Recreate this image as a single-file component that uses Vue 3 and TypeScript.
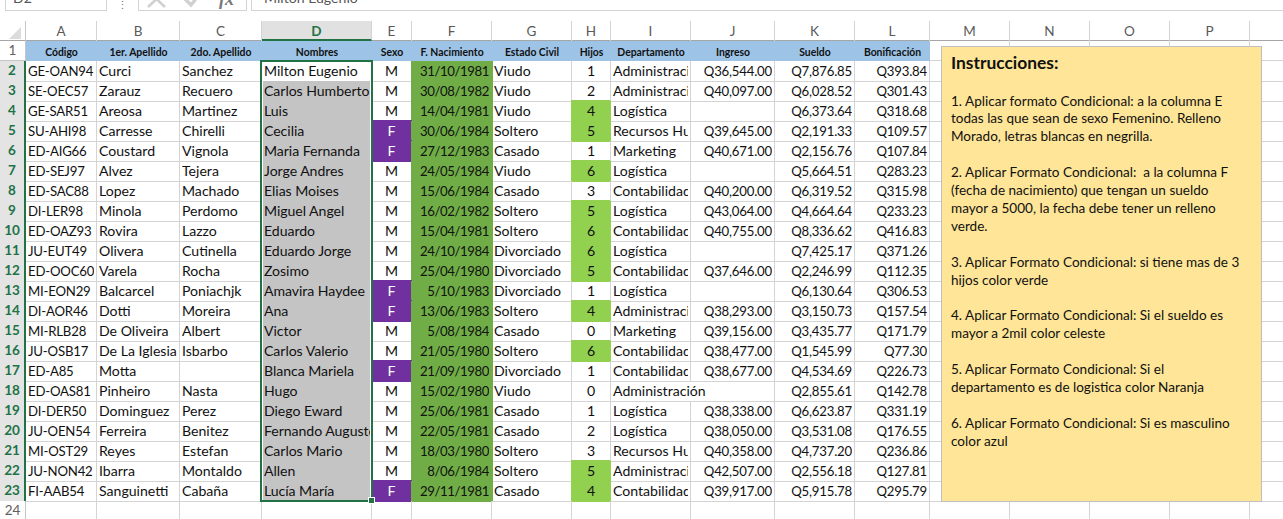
<script setup lang="ts">
interface Row {
  n: number
  cells: string[]
}
const letters = ['A','B','C','D','E','F','G','H','I','J','K','L','M','N','O','P','']
const heads = ['Código','1er. Apellido','2do. Apellido','Nombres','Sexo','F. Nacimiento','Estado Civil','Hijos','Departamento','Ingreso','Sueldo','Bonificación']
const raw = `GE-OAN94|Curci|Sanchez|Milton Eugenio|M|31/10/1981|Viudo|1|Administración|Q36,544.00|Q7,876.85|Q393.84
SE-OEC57|Zarauz|Recuero|Carlos Humberto|M|30/08/1982|Viudo|2|Administración|Q40,097.00|Q6,028.52|Q301.43
GE-SAR51|Areosa|Martinez|Luis|M|14/04/1981|Viudo|4|Logística||Q6,373.64|Q318.68
SU-AHI98|Carresse|Chirelli|Cecilia|F|30/06/1984|Soltero|5|Recursos Humanos|Q39,645.00|Q2,191.33|Q109.57
ED-AIG66|Coustard|Vignola|Maria Fernanda|F|27/12/1983|Casado|1|Marketing|Q40,671.00|Q2,156.76|Q107.84
ED-SEJ97|Alvez|Tejera|Jorge Andres|M|24/05/1984|Viudo|6|Logística||Q5,664.51|Q283.23
ED-SAC88|Lopez|Machado|Elias Moises|M|15/06/1984|Casado|3|Contabilidad|Q40,200.00|Q6,319.52|Q315.98
DI-LER98|Minola|Perdomo|Miguel Angel|M|16/02/1982|Soltero|5|Logística|Q43,064.00|Q4,664.64|Q233.23
ED-OAZ93|Rovira|Lazzo|Eduardo|M|15/04/1981|Soltero|6|Contabilidad|Q40,755.00|Q8,336.62|Q416.83
JU-EUT49|Olivera|Cutinella|Eduardo Jorge|M|24/10/1984|Divorciado|6|Logística||Q7,425.17|Q371.26
ED-OOC60|Varela|Rocha|Zosimo|M|25/04/1980|Divorciado|5|Contabilidad|Q37,646.00|Q2,246.99|Q112.35
MI-EON29|Balcarcel|Poniachjk|Amavira Haydee|F|5/10/1983|Divorciado|1|Logística||Q6,130.64|Q306.53
DI-AOR46|Dotti|Moreira|Ana|F|13/06/1983|Soltero|4|Administración|Q38,293.00|Q3,150.73|Q157.54
MI-RLB28|De Oliveira|Albert|Victor|M|5/08/1984|Casado|0|Marketing|Q39,156.00|Q3,435.77|Q171.79
JU-OSB17|De La Iglesia|Isbarbo|Carlos Valerio|M|21/05/1980|Soltero|6|Contabilidad|Q38,477.00|Q1,545.99|Q77.30
ED-A85|Motta||Blanca Mariela|F|21/09/1980|Divorciado|1|Contabilidad|Q38,677.00|Q4,534.69|Q226.73
ED-OAS81|Pinheiro|Nasta|Hugo|M|15/02/1980|Viudo|0|Administración||Q2,855.61|Q142.78
DI-DER50|Dominguez|Perez|Diego Eward|M|25/06/1981|Casado|1|Logística|Q38,338.00|Q6,623.87|Q331.19
JU-OEN54|Ferreira|Benitez|Fernando Augusto|M|22/05/1981|Casado|2|Logística|Q38,050.00|Q3,531.08|Q176.55
MI-OST29|Reyes|Estefan|Carlos Mario|M|18/03/1980|Soltero|3|Recursos Humanos|Q40,358.00|Q4,737.20|Q236.86
JU-NON42|Ibarra|Montaldo|Allen|M|8/06/1984|Soltero|5|Administración|Q42,507.00|Q2,556.18|Q127.81
FI-AAB54|Sanguinetti|Cabaña|Lucía María|F|29/11/1981|Casado|4|Contabilidad|Q39,917.00|Q5,915.78|Q295.79`
const rows: Row[] = raw.split('\n').map((l, i) => ({ n: i + 2, cells: l.split('|') }))
const extra = [0, 1, 2, 3, 4]

function cellClass(r: Row, c: number): string[] {
  const v = r.cells[c]
  const out: string[] = []
  if (c === 0) out.push('code')
  if (c === 3) out.push(r.n === 2 ? 'active' : 'grey')
  if (c === 4) { out.push('mid'); if (v === 'F') out.push('purple') }
  if (c === 5) out.push('right', 'date', 'green')
  if (c === 7) { out.push('mid'); if (Number(v) > 3) out.push('lime') }
  if (c >= 9) out.push('right', 'num')
  if (c === 8 && r.n === 18) out.push('spill')
  return out
}
const note = [
  ['1. Aplicar formato Condicional: a la columna E', 'todas las que sean de sexo Femenino. Relleno', 'Morado, letras blancas en negrilla.'],
  ['2. Aplicar Formato Condicional:  a la columna F', '(fecha de nacimiento) que tengan un sueldo', 'mayor a 5000, la fecha debe tener un relleno', 'verde.'],
  ['3. Aplicar Formato Condicional: si tiene mas de 3', 'hijos color verde'],
  ['4. Aplicar Formato Condicional: Si el sueldo es', 'mayor a 2mil color celeste'],
  ['5. Aplicar Formato Condicional: Si el', 'departamento es de logistica color Naranja'],
  ['6. Aplicar Formato Condicional: Si es masculino', 'color azul'],
]
</script>

<template>
  <div class="page">
    <div class="topbar">
      <div class="namebox"><span>D2</span></div>
      <div class="dots">⋮</div>
      <div class="fxbox">
        <svg width="108" height="11" viewBox="0 0 108 11">
          <path d="M9 -9 L26 7 M26 -9 L9 7" stroke="#d0d0d0" stroke-width="2.6" fill="none" />
          <path d="M46 -1 L52 5 L60 -5" stroke="#d0d0d0" stroke-width="3.4" fill="none" />
          <text x="80" y="5" class="fx">fx</text>
        </svg>
      </div>
      <div class="formula"><span>Milton Eugenio</span></div>
    </div>

    <div class="sheet">
      <div class="line letters">
        <div class="rowhead corner"><svg width="13" height="12" viewBox="0 0 13 12"><path d="M12 0 V12 H0 Z" fill="#dcdcdc" /></svg></div>
        <div v-for="(l, i) in letters" :key="i" class="lh" :class="{ sel: l === 'D' }">{{ l }}</div>
      </div>

      <div class="line hrow">
        <div class="rowhead plain">1</div>
        <div v-for="h in heads" :key="h" class="th">{{ h }}</div>
        <div v-for="e in extra" :key="e" class="cell"></div>
      </div>

      <div v-for="r in rows" :key="r.n" class="line">
        <div class="rowhead on">{{ r.n }}</div>
        <div v-for="(v, c) in r.cells" :key="c" class="cell" :class="cellClass(r, c)"><span class="txt">{{ v }}</span></div>
        <div v-for="e in extra" :key="e" class="cell"></div>
      </div>

      <div class="line last">
        <div class="rowhead plain">24</div>
        <div v-for="(l, i) in letters" :key="i" class="cell"></div>
      </div>

      <div class="selection"><i class="handle"></i></div>

      <div class="note">
        <h2>Instrucciones:</h2>
        <div v-for="(p, i) in note" :key="i" class="para">
          <div v-for="(t, j) in p" :key="j" class="nl">{{ t }}</div>
        </div>
      </div>
    </div>
  </div>
</template>

<style>
html, body { margin: 0; background: #fff; overflow: hidden; }
</style>

<style scoped>
.page {
  width: 1283px;
  height: 519px;
  overflow: hidden;
  font-family: Lato, "Liberation Sans", sans-serif;
  font-size: 14.1px;
  color: #111;
  background: #fff;
}
.topbar {
  height: 11px;
  margin-bottom: 10px;
  display: flex;
  box-sizing: border-box;
  overflow: hidden;
  position: relative;
}
.namebox, .fxbox, .formula {
  height: 11px;
  box-sizing: border-box;
  border: 1px solid #d4d4d4;
  border-top: 0;
  overflow: hidden;
  position: relative;
  color: #555;
}
.namebox { width: 102px; margin-left: 5px; padding-left: 7px; }
.namebox span, .formula span { display: block; margin-top: -12px; line-height: 20px; }
.dots { width: 31px; text-align: center; color: #777; font-size: 11px; line-height: 9px; }
.fxbox { width: 109px; }
.fxbox svg { display: block; }
.fx { font-family: "Liberation Serif", serif; font-style: italic; font-weight: bold; font-size: 18px; fill: #777; }
.formula { flex: 1; margin-left: 4px; padding-left: 12px; border-right: 0; }

.sheet { position: relative; }
.line {
  display: grid;
  grid-template-columns: 26px 71px 83px 82px 110px 40px 80px 80px 39px 80px 84px 80px 75px 80px 80px 80px 80px 34px;
  height: 20px;
}
.letters { height: 20px; box-sizing: border-box; border-bottom: 1px solid #a6a6a6; }
.rowhead {
  box-sizing: border-box;
  border-right: 1px solid #c6c6c6;
  border-bottom: 1px solid #c6c6c6;
  text-align: center;
  line-height: 19px;
  color: #5f5f5f;
  font-size: 13.5px;
}
.rowhead.corner { border-bottom: 0; display: flex; justify-content: flex-end; align-items: flex-end; padding: 0 3px 2px 0; }
.rowhead.on {
  background: #e4e4e4;
  color: #217346;
  font-weight: bold;
  border-right: 2px solid #217346;
  border-bottom-color: #d0d0d0;
}
.rowhead.plain { background: #fff; }
.lh {
  box-sizing: border-box;
  border-right: 1px solid #d4d4d4;
  text-align: center;
  line-height: 20px;
  font-size: 13.5px;
  color: #5a5a5a;
}
.lh.sel {
  background: #e1e1e1;
  color: #217346;
  font-weight: bold;
  border-bottom: 2px solid #217346;
  height: 20px;
}
.th {
  background: #9dc3e6;
  text-align: center;
  font-weight: bold;
  font-size: 10.4px;
  line-height: 22px;
  white-space: nowrap;
  overflow: hidden;
  color: #111;
}
.cell {
  box-sizing: border-box;
  border-right: 1px solid #d4d4d4;
  border-bottom: 1px solid #d4d4d4;
  padding: 0 2px;
  line-height: 20px;
  white-space: nowrap;
  overflow: hidden;
  min-width: 0;
}
.txt { display: block; overflow: hidden; }
.spill .txt { overflow: visible; }
.code { font-size: 13.2px; letter-spacing: -0.2px; }
.num { font-size: 13.2px; letter-spacing: -0.2px; }
.date { font-size: 13.2px; letter-spacing: -0.42px; }
.right { text-align: right; padding-right: 2px; }
.mid { text-align: center; }
.green { background: #70ad47; border-color: #70ad47; box-shadow: -1px 0 0 #70ad47, 1px 0 0 #70ad47; overflow: visible; }
.lime { background: #92d050; border-color: #92d050; box-shadow: -1px -1px 0 #92d050; overflow: visible; }
.purple { background: #7030a0; color: #fff; border-bottom-color: #7030a0; box-shadow: 0 -1px 0 #7030a0; overflow: visible; }
.grey { background: #c4c4c4; border-left: 1px solid #fff; border-right: 2px solid #fff; border-bottom-color: #d0d0d0; padding: 0 0 0 1px; letter-spacing: -0.05px; }
.active { background: #fff; }
.spill { overflow: visible; border-right-color: transparent; position: relative; }

.selection {
  position: absolute;
  left: 260px;
  top: 39px;
  width: 113px;
  height: 442px;
  box-sizing: border-box;
  border: 2px solid #217346;
  pointer-events: none;
}
.handle {
  position: absolute;
  right: -4px;
  bottom: -4px;
  width: 5px;
  height: 5px;
  background: #217346;
  border: 1px solid #fff;
}
.note {
  position: absolute;
  left: 941px;
  top: 25px;
  width: 321px;
  height: 456px;
  box-sizing: border-box;
  background: #ffe597;
  border: 1px solid #bfbfbf;
  padding: 4px 9px;
  color: #111;
  font-size: 13.55px;
  line-height: 17.9px;
}
.note h2 {
  margin: 0 0 18.5px;
  font-size: 17.4px;
  line-height: 23px;
  font-weight: bold;
}
.para { margin-bottom: 17.9px; }
.nl { white-space: pre; }
</style>
